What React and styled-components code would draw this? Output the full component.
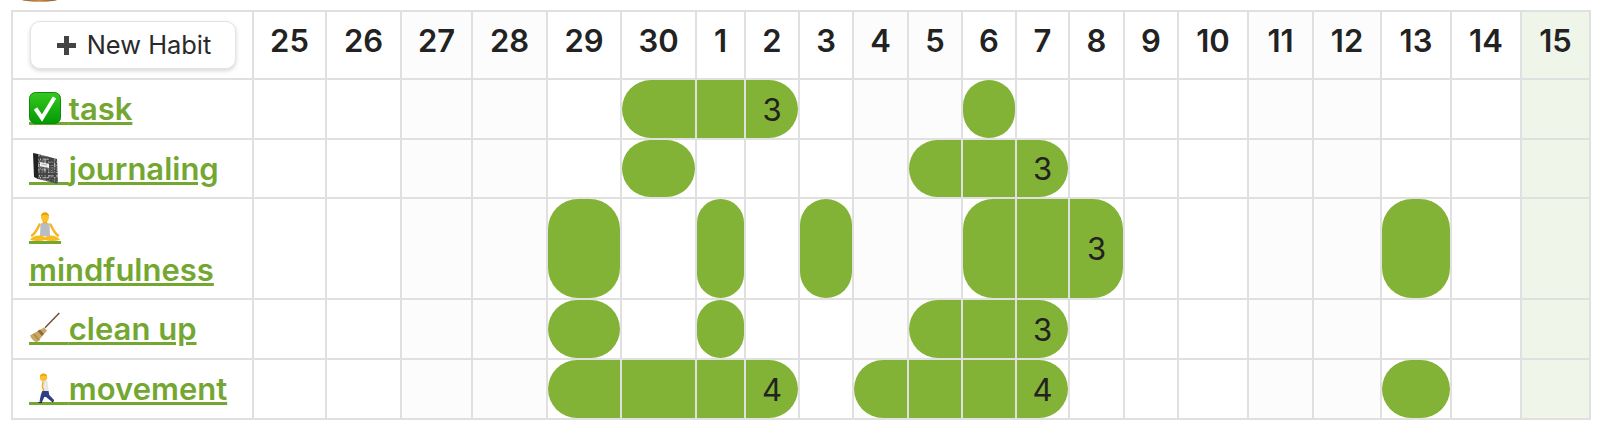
import React from "react";
import styled, { createGlobalStyle } from "styled-components";

const COLUMN_WIDTHS = [239, 71, 73, 69, 73, 72, 73, 47, 52, 52, 53, 52, 52, 51, 53, 52, 68, 63, 66, 68, 68, 67];
const ROW_HEIGHTS = [66, 58, 57, 99, 58, 58];

const DAYS = [
  { n: 25 }, { n: 26 }, { n: 27, tone: "weekend" }, { n: 28, tone: "weekend" }, { n: 29 }, { n: 30 },
  { n: 1 }, { n: 2 }, { n: 3 }, { n: 4, tone: "weekend" }, { n: 5, tone: "weekend" }, { n: 6 }, { n: 7 },
  { n: 8 }, { n: 9 }, { n: 10 }, { n: 11, tone: "weekend" }, { n: 12, tone: "weekend" }, { n: 13 }, { n: 14 },
  { n: 15, tone: "today" },
];

const TaskIcon = () => (
  <svg viewBox="0 0 32 36">
    <defs>
      <linearGradient id="chk" x1="0" y1="0" x2="0" y2="1">
        <stop offset="0" stopColor="#35c81e" />
        <stop offset="1" stopColor="#039a05" />
      </linearGradient>
    </defs>
    <rect x="0.5" y="3.5" width="31" height="31" rx="6" fill="url(#chk)" stroke="#0c8a0a" />
    <path d="M6.500 19.500 L13 29 L25.500 8.500" fill="none" stroke="#fff" strokeWidth="4" />
  </svg>
);

const SPECKS = Array.from({ length: 420 }, (_, i) => ({
  x: 9 + ((i * 37 + i * i * 3) % 41) / 2,
  y: 5 + ((i * 23 + i * i * 7) % 61) / 2,
  o: 0.4 + ((i * 13) % 6) / 10,
}));

const NotebookIcon = () => (
  <svg viewBox="0 0 32 36">
    <defs>
      <clipPath id="cover"><polygon points="9,5 28,10 29,35 9,30" /></clipPath>
    </defs>
    <polygon points="4,4 9,5 9,30 5,28" fill="#222" />
    <polygon points="9,5 28,10 29,35 9,30" fill="#444" />
    <g clipPath="url(#cover)">
      {SPECKS.map((s, i) => (
        <rect key={i} x={s.x} y={s.y} width="0.8" height="0.8" fill="#d4d4d4" opacity={s.o} />
      ))}
    </g>
    <polygon points="11,13 20,15 20,19 11,17" fill="#f2f2f2" />
    <path d="M12.500 15 L18 16.200" stroke="#888" strokeWidth="0.7" />
  </svg>
);

const MeditationIcon = () => (
  <svg viewBox="0 0 32 36">
    <path d="M10.500 16.500 C8.500 21 6.500 25 3 27.500" fill="none" stroke="#f6b51e" strokeWidth="2.400" strokeLinecap="round" />
    <path d="M21.500 16.500 C23.500 21 25.500 25 29 27.500" fill="none" stroke="#f6b51e" strokeWidth="2.400" strokeLinecap="round" />
    <path d="M11.500 15.500 L13.500 15 L18.500 15 L20.500 15.500 L21 28 L11 28 Z" fill="#b9bcc2" />
    <rect x="13.800" y="12" width="4.400" height="3.500" fill="#f3ae1a" />
    <ellipse cx="16" cy="9" rx="4" ry="5" fill="#f9c22b" />
    <path d="M12 8 C12 3.500 20 3.500 20 8 C18 6.500 14 6.500 12 8 Z" fill="#e8a012" />
    <path d="M1 31.500 C5 27 11 26.500 16 29 C21 26.500 27 27 31 31.500 C27 33.500 20 33.500 16 32 C12 33.500 5 33.500 1 31.500 Z" fill="#f7bb24" />
  </svg>
);

const BroomIcon = () => (
  <svg viewBox="0 0 32 36">
    <path d="M30.300 4 L16 18.700" stroke="#7a5238" strokeWidth="1.600" />
    <path d="M15 18.500 L18 21.500 L8 33.500 C5 32.500 2.500 30 1 26.500 Z" fill="#c9a661" />
    <path d="M11 20.500 L14.800 24.800 L13 27 L8.500 22 Z" fill="#8e6a3c" />
    <path d="M4.500 25 L10.500 31.300" stroke="#a98447" strokeWidth="1.200" />
  </svg>
);

const WalkingIcon = () => (
  <svg viewBox="0 0 32 36">
    <circle cx="14.500" cy="8.500" r="3.700" fill="#f9c22b" />
    <path d="M11 7.800 C11.500 3.500 17.500 3.500 18.200 7.500 C15.500 6.200 13.500 6.300 11 7.800 Z" fill="#e8a012" />
    <path d="M13.500 12 L18 12 L19.500 22.500 L13.500 22.500 Z" fill="#e6e8ec" stroke="#d5d8de" strokeWidth="0.4" />
    <path d="M13.300 22 L19.500 22 L20.300 26 L24.500 30.500 L22.500 32.500 L17 28 L15.300 28 L13 33 L10.500 32.500 L11.800 26 Z" fill="#2f3f86" />
    <path d="M9 33.500 L13 32.500 L13.300 34 L9 34 Z M22.500 32.800 L24.500 30.200 L25 32 L23.500 33.500 Z" fill="#1b1f3a" />
    <path d="M14 12.500 L13.300 18 L15 22" fill="none" stroke="#f3ae1a" strokeWidth="1.400" />
  </svg>
);

const HABITS = [
  { name: "task", icon: TaskIcon, streaks: [[5, 7], [11, 11]] },
  { name: "journaling", icon: NotebookIcon, streaks: [[5, 5], [10, 12]] },
  { name: "mindfulness", icon: MeditationIcon, streaks: [[4, 4], [6, 6], [8, 8], [11, 13], [18, 18]] },
  { name: "clean up", icon: BroomIcon, streaks: [[4, 4], [6, 6], [10, 12]] },
  { name: "movement", icon: WalkingIcon, streaks: [[4, 7], [9, 12], [18, 18]] },
];

const GlobalStyle = createGlobalStyle`
  html, body { margin: 0; padding: 0; background: #fff; }
  body { font-family: Inter, "Noto Sans", sans-serif; color: #222; }
`;

const Page = styled.main`
  width: 1606px;
  height: 436px;
  overflow: hidden;
`;

const ClippedEmoji = styled.div`
  height: 10px;
  padding-left: 22px;
  overflow: hidden;
  svg { display: block; }
`;

const Tracker = styled.section`
  display: grid;
  grid-template-columns: ${COLUMN_WIDTHS.map((w) => `${w}px`).join(" ")};
  grid-template-rows: ${ROW_HEIGHTS.map((h) => `${h}px`).join(" ")};
  gap: 2px;
  width: max-content;
  margin-left: 11px;
  padding: 2px;
  background: #e0e0e0;
`;

const toneColor = { plain: "#fff", weekend: "#fcfcfc", today: "#eff5e9" };

const Corner = styled.div`
  background: #fff;
  padding: 9px 0 0 17px;
`;

const NewHabit = styled.button`
  display: flex;
  align-items: center;
  justify-content: center;
  gap: 11px;
  box-sizing: border-box;
  width: 206px;
  height: 48px;
  padding: 0 0 0 2px;
  background: #fff;
  border: 1.5px solid #e4e4e4;
  border-radius: 10px;
  box-shadow: 0 2px 4px rgba(0, 0, 0, 0.16);
  font: 400 25.4px/1 Inter, sans-serif;
  color: #2a2a2a;
  svg { display: block; flex: none; }
`;

const DayHead = styled.div`
  background: ${(p) => toneColor[p.$tone || "plain"]};
  padding-top: 8px;
  font-size: 31px;
  line-height: 42px;
  font-weight: 600;
  text-align: center;
  color: #222;
`;

const LabelCell = styled.div`
  background: #fff;
  padding: 8px 16px;
  font-size: 31px;
  line-height: 42px;
  font-weight: 600;
`;

const HabitLink = styled.a`
  color: #74a732;
  text-decoration: underline;
  text-decoration-thickness: 3px;
  text-underline-offset: 2px;
`;

const EmojiSlot = styled.span`
  position: relative;
  display: inline-block;
  width: 32px;
  height: 3px;
  background: #74a732;
  vertical-align: -5px;
  svg {
    position: absolute;
    left: 0;
    bottom: 0;
    width: 32px;
    height: 36px;
  }
`;

const DayCell = styled.div`
  display: flex;
  background: ${(p) => toneColor[p.$tone || "plain"]};
`;

const Pill = styled.div`
  flex: 1;
  display: flex;
  align-items: center;
  justify-content: center;
  background: #82b236;
  border-radius: ${(p) => (p.$first ? "30px" : "0")} ${(p) => (p.$last ? "30px" : "0")}
    ${(p) => (p.$last ? "30px" : "0")} ${(p) => (p.$first ? "30px" : "0")};
  font-size: 31px;
  font-weight: 400;
  color: #222;
`;

function renderDay(habit, day, index) {
  const streak = habit.streaks.find(([a, b]) => index >= a && index <= b);
  if (!streak) return <DayCell key={index} $tone={day.tone} />;
  const [start, end] = streak;
  const length = end - start + 1;
  return (
    <DayCell key={index} $tone={day.tone}>
      <Pill $first={index === start} $last={index === end}>
        {index === end && length > 1 ? length : null}
      </Pill>
    </DayCell>
  );
}

export default function App() {
  return (
    <Page>
      <GlobalStyle />
      <ClippedEmoji>
        <svg width="36" height="4" viewBox="0 0 36 4">
          <defs>
            <linearGradient id="cut" x1="0" y1="0" x2="1" y2="0">
              <stop offset="0" stopColor="#9a5f2a" />
              <stop offset="0.5" stopColor="#c98a4a" />
              <stop offset="1" stopColor="#8a5424" />
            </linearGradient>
          </defs>
          <path d="M0 0 L35 0 C30 2.400 6 2.400 0 0 Z" fill="url(#cut)" />
        </svg>
      </ClippedEmoji>
      <Tracker>
        <Corner>
          <NewHabit type="button">
            <svg width="19" height="19" viewBox="0 0 19 19">
              <path d="M7 0 H12 V7 H19 V12 H12 V19 H7 V12 H0 V7 H7 Z" fill="#444" />
            </svg>
            New Habit
          </NewHabit>
        </Corner>
        {DAYS.map((d) => (
          <DayHead key={d.n} $tone={d.tone}>{d.n}</DayHead>
        ))}
        {HABITS.map((h) => {
          const Icon = h.icon;
          return (
            <React.Fragment key={h.name}>
              <LabelCell>
                <HabitLink href="#">
                  <EmojiSlot><Icon /></EmojiSlot> {h.name}
                </HabitLink>
              </LabelCell>
              {DAYS.map((d, i) => renderDay(h, d, i))}
            </React.Fragment>
          );
        })}
      </Tracker>
    </Page>
  );
}
